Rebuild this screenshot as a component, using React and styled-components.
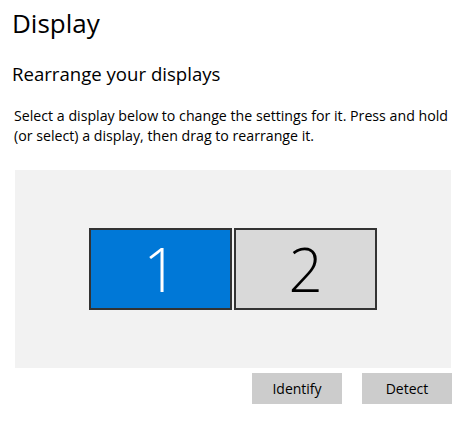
import React from "react";
import styled, { createGlobalStyle } from "styled-components";

const GlobalStyle = createGlobalStyle`
  html, body {
    margin: 0;
    padding: 0;
    background: #ffffff;
  }
  body {
    font-family: "Open Sans", "Noto Sans", sans-serif;
    color: #000000;
  }
`;

const Page = styled.div`
  width: 466px;
  height: 422px;
  padding: 0 15px 0 12px;
  box-sizing: border-box;
  display: flex;
  flex-direction: column;
`;

const Title = styled.h1`
  margin: 5px 0 0;
  font-size: 26px;
  font-weight: 400;
  line-height: 36px;
`;

const Subtitle = styled.h2`
  margin: 20px 0 0;
  font-size: 18.6px;
  font-weight: 400;
  line-height: 26px;
`;

const Description = styled.p`
  margin: 19px 0 0 2px;
  font-size: 14.2px;
  line-height: 20px;
  white-space: nowrap;
`;

const Canvas = styled.div`
  margin: 24px 0 0 3px;
  height: 198px;
  background: #f2f2f2;
  display: flex;
  align-items: center;
  justify-content: center;
  gap: 2px;
`;

const Monitor = styled.div`
  width: 143px;
  height: 82px;
  box-sizing: border-box;
  border: 2px solid #333333;
  background: ${(p) => (p.$active ? "#0078d7" : "#d9d9d9")};
  color: ${(p) => (p.$active ? "#ffffff" : "#000000")};
  display: flex;
  align-items: center;
  justify-content: center;
  font-size: 60px;
  font-weight: 300;
  line-height: 1;
`;

const Actions = styled.div`
  display: flex;
  justify-content: flex-end;
  gap: 20px;
  margin: 5px -1px 0 0;
`;

const Button = styled.button`
  width: 90px;
  height: 31px;
  border: none;
  background: #cccccc;
  font-family: inherit;
  font-size: 14px;
  color: #000000;
  padding: 0;
`;

export default function App() {
  return (
    <Page>
      <GlobalStyle />
      <Title>Display</Title>
      <Subtitle>Rearrange your displays</Subtitle>
      <Description>
        Select a display below to change the settings for it. Press and hold
        <br />
        (or select) a display, then drag to rearrange it.
      </Description>
      <Canvas>
        <Monitor $active>1</Monitor>
        <Monitor>2</Monitor>
      </Canvas>
      <Actions>
        <Button>Identify</Button>
        <Button>Detect</Button>
      </Actions>
    </Page>
  );
}
